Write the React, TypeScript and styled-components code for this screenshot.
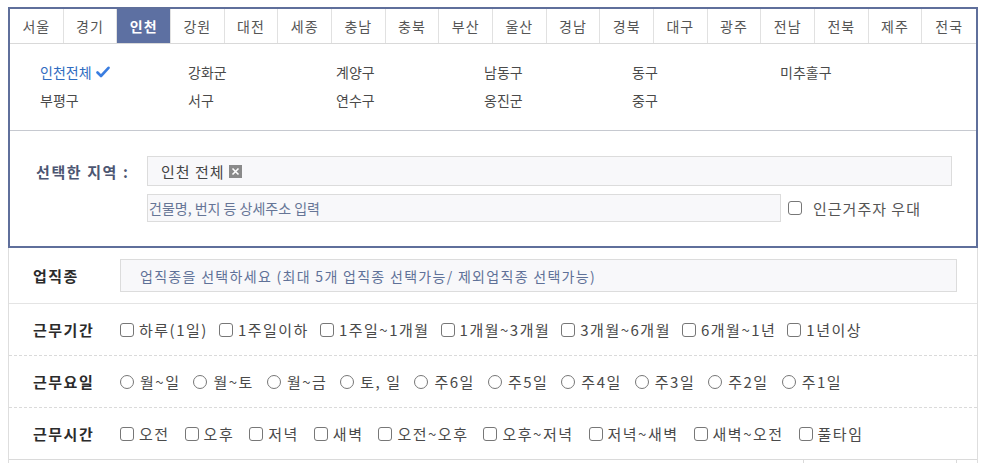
import React from 'react';
import styled, { createGlobalStyle } from 'styled-components';

const regions = [
	'서울', '경기', '인천', '강원', '대전', '세종', '충남', '충북', '부산',
	'울산', '경남', '경북', '대구', '광주', '전남', '전북', '제주', '전국',
];

const districts = [
	'인천전체', '강화군', '계양구', '남동구', '동구', '미추홀구',
	'부평구', '서구', '연수구', '옹진군', '중구',
];

const periods = ['하루(1일)', '1주일이하', '1주일~1개월', '1개월~3개월', '3개월~6개월', '6개월~1년', '1년이상'];
const days = ['월~일', '월~토', '월~금', '토, 일', '주6일', '주5일', '주4일', '주3일', '주2일', '주1일'];
const hours = ['오전', '오후', '저녁', '새벽', '오전~오후', '오후~저녁', '저녁~새벽', '새벽~오전', '풀타임'];

function App() {
	return (
		<>
			<GlobalStyle />
			<Page>
				<RegionFrame>
					<Tabs>
						{regions.map((name) => (
							<Tab key={name} active={name === '인천'}>
								{name}
							</Tab>
						))}
					</Tabs>
					<DistrictGrid>
						{districts.map((name, i) => (
							<District key={name} selected={i === 0}>
								{name}
								{i === 0 ? (
									<CheckMark viewBox='0 0 14 12'>
										<path d='M1.5 6.5 L5 10 L12.5 1.8' />
									</CheckMark>
								) : null}
							</District>
						))}
					</DistrictGrid>
					<SelectedArea>
						<SelectedLabel>선택한 지역 :</SelectedLabel>
						<SelectedFields>
							<ChosenBox>
								인천 전체
								<RemoveBox>
									<svg viewBox='0 0 13 13' width='13' height='13'>
										<rect width='13' height='13' fill='#8a8a8a' />
										<path d='M3.5 3.5 L9.5 9.5 M9.5 3.5 L3.5 9.5' stroke='#fff' strokeWidth='1.6' />
									</svg>
								</RemoveBox>
							</ChosenBox>
							<AddressRow>
								<AddressBox>건물명, 번지 등 상세주소 입력</AddressBox>
								<Option>
									<CheckBox />
									<NearLabel>인근거주자 우대</NearLabel>
								</Option>
							</AddressRow>
						</SelectedFields>
					</SelectedArea>
				</RegionFrame>
				<Rows>
					<Row tall>
						<RowLabel>업직종</RowLabel>
						<JobBox>업직종을 선택하세요 (최대 5개 업직종 선택가능/ 제외업직종 선택가능)</JobBox>
					</Row>
					<Row>
						<RowLabel>근무기간</RowLabel>
						<Options spacing={11}>
							{periods.map((p) => (
								<Option key={p}>
									<CheckBox />
									{p}
								</Option>
							))}
						</Options>
					</Row>
					<Row dashed>
						<RowLabel>근무요일</RowLabel>
						<Options spacing={13}>
							{days.map((d) => (
								<Option key={d}>
									<Radio />
									{d}
								</Option>
							))}
						</Options>
					</Row>
					<Row dashed>
						<RowLabel>근무시간</RowLabel>
						<Options spacing={15}>
							{hours.map((h) => (
								<Option key={h}>
									<CheckBox />
									{h}
								</Option>
							))}
						</Options>
					</Row>
					<Row>
						<RowLabel />
						<PayBox />
					</Row>
				</Rows>
			</Page>
		</>
	);
}

const GlobalStyle = createGlobalStyle`
	body {
		margin: 0;
		background: #fff;
		font-family: 'Noto Sans CJK KR', 'Noto Sans', sans-serif;
		color: #444;
		overflow: hidden;
	}
`;
const Page = styled('div')`
	width: 970px;
	padding: 7px 7px 0 8px;
`;
const RegionFrame = styled('div')`
	border: 2px solid #5f6f9b;
	background: #fff;
`;
const Tabs = styled('div')`
	display: grid;
	grid-template-columns: repeat(18, 1fr);
	height: 34px;
	border-bottom: 1px solid #d9d9d9;
`;
const Tab = styled('div')<{ active?: boolean }>`
	display: flex;
	align-items: center;
	justify-content: center;
	font-size: 14px;
	letter-spacing: 1px;
	border-right: 1px solid #e1e1e1;
	background: ${(p) => (p.active ? '#5d70a2' : '#fff')};
	color: ${(p) => (p.active ? '#fff' : '#555')};
	font-weight: ${(p) => (p.active ? 700 : 400)};
	&:last-child {
		border-right: none;
	}
`;
const DistrictGrid = styled('div')`
	display: grid;
	grid-template-columns: repeat(6, 148px);
	grid-auto-rows: 28px;
	padding: 14px 0 16px 30px;
	border-bottom: 1px solid #c6c9d0;
`;
const District = styled('div')<{ selected?: boolean }>`
	display: flex;
	align-items: center;
	gap: 4px;
	font-size: 14px;
	color: ${(p) => (p.selected ? '#2f6cc0' : '#4a4a4a')};
`;
const CheckMark = styled('svg')`
	width: 14px;
	height: 12px;
	fill: none;
	stroke: #3a7de0;
	stroke-width: 2.6;
	stroke-linecap: round;
	stroke-linejoin: round;
`;
const SelectedArea = styled('div')`
	display: flex;
	padding: 25px 24px 24px 26px;
`;
const SelectedLabel = styled('div')`
	width: 111px;
	height: 30px;
	display: flex;
	align-items: center;
	font-size: 15px;
	font-weight: 700;
	color: #4d5672;
	letter-spacing: 1.6px;
`;
const SelectedFields = styled('div')`
	flex: 1;
	display: flex;
	flex-direction: column;
	gap: 8px;
`;
const FieldBox = styled('div')`
	display: flex;
	align-items: center;
	box-sizing: border-box;
	background: #f8f8fa;
	border: 1px solid #dcdcdc;
	font-size: 14px;
`;
const ChosenBox = styled(FieldBox)`
	height: 30px;
	padding-left: 13px;
	gap: 4px;
	font-size: 15px;
	letter-spacing: 1px;
	color: #444;
`;
const RemoveBox = styled('span')`
	display: flex;
	width: 13px;
	height: 13px;
`;
const AddressRow = styled('div')`
	display: flex;
	align-items: center;
	gap: 7px;
`;
const AddressBox = styled(FieldBox)`
	width: 634px;
	height: 28px;
	padding-left: 1px;
	color: #667596;
`;
const NearLabel = styled('span')`
	margin-left: 6px;
	letter-spacing: 1px;
	color: #555;
`;
const Rows = styled('div')`
	border-left: 1px solid #dedede;
	border-right: 1px solid #dedede;
`;
const Row = styled('div')<{ tall?: boolean; dashed?: boolean }>`
	display: flex;
	align-items: center;
	height: ${(p) => (p.tall ? '55px' : '51px')};
	padding: 0 20px 0 24px;
	border-bottom: ${(p) => (p.tall ? '1px solid #e4e4e4' : 'none')};
	border-top: ${(p) => (p.dashed ? '1px dashed #dadada' : 'none')};
	&:last-child {
		border-top: 1px solid #dadada;
		align-items: flex-start;
	}
`;
const RowLabel = styled('div')`
	width: 87px;
	flex-shrink: 0;
	font-size: 15px;
	font-weight: 700;
	color: #2b2b2b;
	letter-spacing: 1.5px;
`;
const JobBox = styled(FieldBox)`
	flex: 1;
	height: 33px;
	padding-left: 19px;
	color: #5f7198;
	letter-spacing: 1.3px;
`;
const Options = styled('div')<{ spacing: number }>`
	display: flex;
	align-items: center;
	gap: ${(p) => p.spacing}px;
`;
const Option = styled('label')`
	display: flex;
	align-items: center;
	gap: 5px;
	font-size: 15px;
	letter-spacing: 1.5px;
	color: #4a4a4a;
`;
const CheckBox = styled('span')`
	width: 12px;
	height: 12px;
	border: 1px solid #777;
	border-radius: 3px;
	background: #fff;
`;
const Radio = styled('span')`
	width: 12px;
	height: 12px;
	border: 1px solid #777;
	border-radius: 50%;
	background: #fff;
	margin-right: 1px;
`;
const PayBox = styled('div')`
	margin-left: auto;
	margin-right: 0;
	width: 152px;
	height: 30px;
	border-left: 1px solid #dadada;
	border-right: 1px solid #dadada;
`;

export default App;
